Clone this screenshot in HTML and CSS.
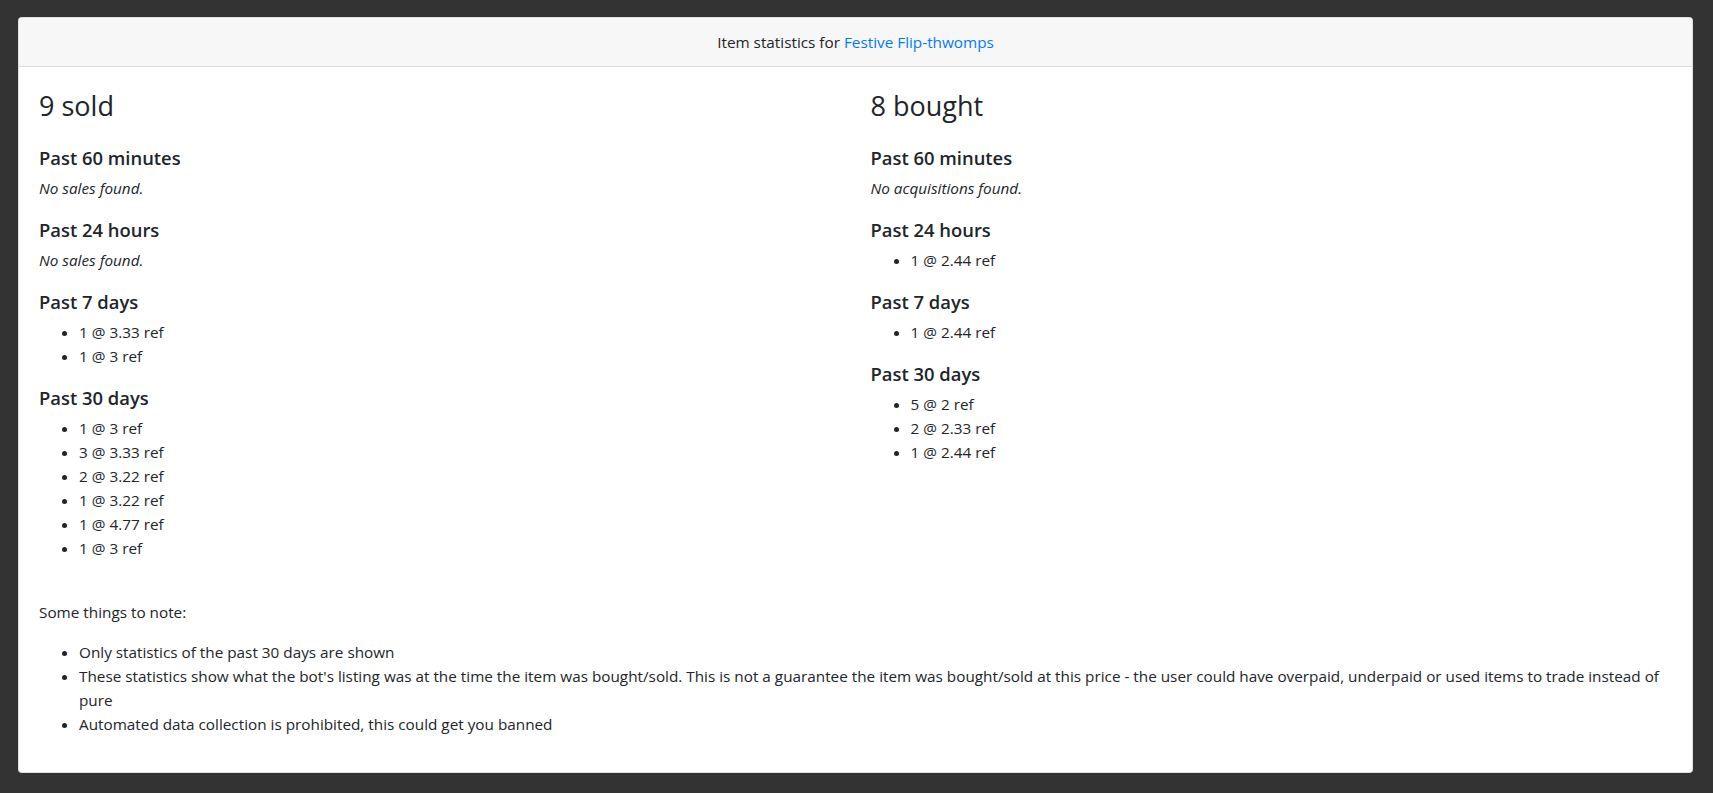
FILE: index.html
```html
<!DOCTYPE html>
<html lang="en">
<head>
    <meta charset="UTF-8">
    <meta name="viewport" content="width=device-width, initial-scale=1.0">
    <title>Item statistics - Festive Flip-thwomps</title>
    <link rel="stylesheet" href="styles.css">
</head>
<body>
    <div class="card">
        <div class="card-header">
            Item statistics for <a href="#">Festive Flip-thwomps</a>
        </div>
        <div class="card-body">
            <div class="row">
                <div class="col">
                    <h2 class="title">9 sold</h2>

                    <h5>Past 60 minutes</h5>
                    <p class="empty">No sales found.</p>

                    <h5>Past 24 hours</h5>
                    <p class="empty">No sales found.</p>

                    <h5>Past 7 days</h5>
                    <ul>
                        <li>1 @ 3.33 ref</li>
                        <li>1 @ 3 ref</li>
                    </ul>

                    <h5>Past 30 days</h5>
                    <ul>
                        <li>1 @ 3 ref</li>
                        <li>3 @ 3.33 ref</li>
                        <li>2 @ 3.22 ref</li>
                        <li>1 @ 3.22 ref</li>
                        <li>1 @ 4.77 ref</li>
                        <li>1 @ 3 ref</li>
                    </ul>
                </div>
                <div class="col">
                    <h2 class="title">8 bought</h2>

                    <h5>Past 60 minutes</h5>
                    <p class="empty">No acquisitions found.</p>

                    <h5>Past 24 hours</h5>
                    <ul>
                        <li>1 @ 2.44 ref</li>
                    </ul>

                    <h5>Past 7 days</h5>
                    <ul>
                        <li>1 @ 2.44 ref</li>
                    </ul>

                    <h5>Past 30 days</h5>
                    <ul>
                        <li>5 @ 2 ref</li>
                        <li>2 @ 2.33 ref</li>
                        <li>1 @ 2.44 ref</li>
                    </ul>
                </div>
            </div>

            <div class="notes">
                <p>Some things to note:</p>
                <ul>
                    <li>Only statistics of the past 30 days are shown</li>
                    <li>These statistics show what the bot's listing was at the time the item was bought/sold. This is not a guarantee the item was bought/sold at this price - the user could have overpaid, underpaid or used items to trade instead of pure</li>
                    <li>Automated data collection is prohibited, this could get you banned</li>
                </ul>
            </div>
        </div>
    </div>
</body>
</html>
```

FILE: styles.css
```css
html {
    background-color: #333333;
}
body {
    font-family: "Open Sans", "Noto Sans", sans-serif;
    font-size: 15.3px;
    line-height: 24px;
    color: #212529;
    margin: 0;
    padding: 17px 20px 20px 18px;
}
a {
    color: #007bff;
    text-decoration: none;
}
.card {
    background-color: #ffffff;
    border: 1px solid rgba(0, 0, 0, 0.125);
    border-radius: 4px;
    overflow: hidden;
}
.card-header {
    background-color: #f7f7f7;
    border-bottom: 1px solid #dcdcdc;
    padding: 12px 20px;
    text-align: center;
}
.card-body {
    padding: 20px;
}
.row {
    display: grid;
    grid-template-columns: 1fr 1fr;
    column-gap: 30px;
}
.title {
    font-size: 27px;
    font-weight: 500;
    line-height: 38px;
    margin: 0 0 19px 0;
}
h5 {
    font-size: 18.4px;
    font-weight: 600;
    line-height: 24px;
    margin: 0 0 6px 0;
    padding-top: 2px;
}
p {
    margin: 0 0 16px 0;
}
.empty {
    font-style: italic;
}
ul {
    margin: 0 0 16px 0;
    padding-left: 40px;
}
.notes {
    margin-top: 24px;
}
```
